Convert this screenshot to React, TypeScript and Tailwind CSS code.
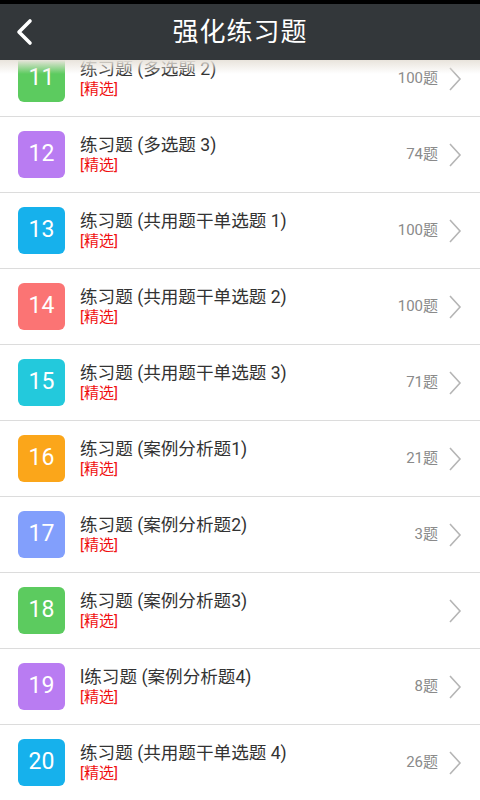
import React from 'react'

type Item = { n: number; color: string; title: string; count: string }

const items: Item[] = [
  { n: 11, color: 'bg-[#5ccb5f]', title: '练习题 (多选题 2)', count: '100题' },
  { n: 12, color: 'bg-[#b97cf2]', title: '练习题 (多选题 3)', count: '74题' },
  { n: 13, color: 'bg-[#16b1ec]', title: '练习题 (共用题干单选题 1)', count: '100题' },
  { n: 14, color: 'bg-[#fb7474]', title: '练习题 (共用题干单选题 2)', count: '100题' },
  { n: 15, color: 'bg-[#23c9dc]', title: '练习题 (共用题干单选题 3)', count: '71题' },
  { n: 16, color: 'bg-[#fba61a]', title: '练习题 (案例分析题1)', count: '21题' },
  { n: 17, color: 'bg-[#829ffc]', title: '练习题 (案例分析题2)', count: '3题' },
  { n: 18, color: 'bg-[#5ccb5f]', title: '练习题 (案例分析题3)', count: '' },
  { n: 19, color: 'bg-[#b97cf2]', title: 'l练习题 (案例分析题4)', count: '8题' },
  { n: 20, color: 'bg-[#16b1ec]', title: '练习题 (共用题干单选题 4)', count: '26题' },
]

const font = { fontFamily: 'Roboto, "Noto Sans CJK SC", sans-serif' }

const Row = ({ item }: { item: Item }) => (
  <div className="flex items-center h-[76px] border-b border-[#dcdcdc] bg-white">
    <div
      className={`ml-[18px] w-[47px] h-[47px] rounded-[6px] flex items-center justify-center text-white text-[23px] ${item.color}`}
    >
      {item.n}
    </div>
    <div className="ml-[15px] flex-1 flex flex-col -mt-[2px]">
      <div className="text-[17.6px] leading-[22px] text-[#333]">{item.title}</div>
      <div className="text-[15px] leading-[18px] text-[#f01010]">[精选]</div>
    </div>
    <div className="text-[15px] text-[#8a8a8a] mr-[10px]">{item.count}</div>
    <svg width="14" height="26" viewBox="0 0 14 26" className="mr-[18px]">
      <path d="M2 2 L12 13 L2 24" fill="none" stroke="#b5b5b5" strokeWidth="1.6" />
    </svg>
  </div>
)

export default function App() {
  return (
    <div className="w-[480px] h-[800px] overflow-hidden flex flex-col bg-white" style={font}>
      <div className="h-[4px] bg-black" />
      <div className="h-[56px] bg-[#33373a] flex items-center relative z-10">
        <svg width="20" height="28" viewBox="0 0 20 28" className="ml-[14px]">
          <path d="M16 3 L5 14 L16 25" fill="none" stroke="#fff" strokeWidth="3.6" strokeLinecap="round" strokeLinejoin="round" />
        </svg>
        <div className="flex-1 text-center text-white text-[26px] mr-[34px] tracking-[1px]">强化练习题</div>
      </div>
      <div className="relative flex-1 overflow-hidden">
        <div className="absolute top-0 left-0 right-0 h-[14px] bg-gradient-to-b from-[#e9e4dc] to-transparent z-10" />
        <div className="-mt-[19px]">
          {items.map((it) => (
            <Row key={it.n} item={it} />
          ))}
        </div>
      </div>
    </div>
  )
}
